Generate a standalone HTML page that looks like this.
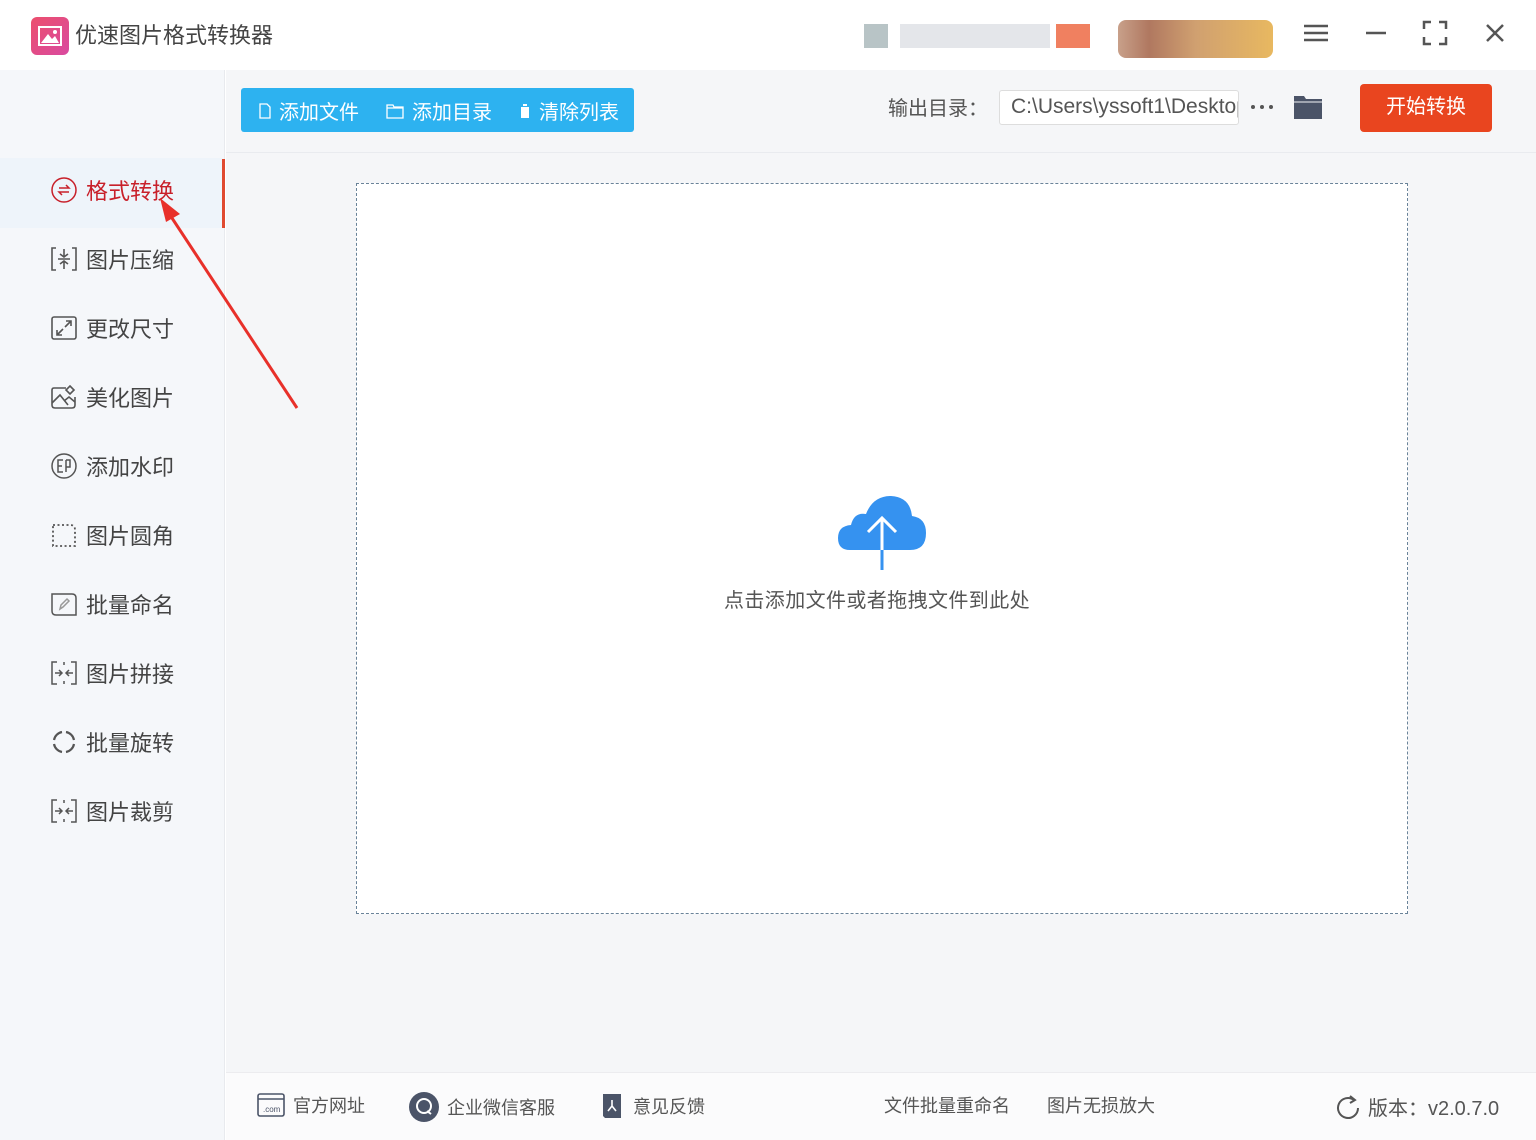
<!DOCTYPE html>
<html><head><meta charset="utf-8"><style>
*{margin:0;padding:0;box-sizing:border-box}
body{width:1536px;height:1140px;overflow:hidden;background:#fff;font-family:"Liberation Sans","Noto Sans CJK SC",sans-serif;color:#444;position:relative}
.abs{position:absolute}
.title{left:0;top:0;width:1536px;height:70px;background:#fff}
.side{left:0;top:70px;width:225px;height:1070px;background:#f5f7fa;border-right:1px solid #e8eaee}
.main{left:226px;top:70px;width:1310px;height:1002px;background:#f5f6f8}
.tb{left:226px;top:70px;width:1310px;height:83px;border-bottom:1px solid #e9ebef;background:#f5f6f8}
.item{position:absolute;left:50px;font-size:22px;color:#444;display:flex;align-items:center;gap:8px;height:30px}
.item svg{width:28px;height:28px}
.foot{left:226px;top:1072px;width:1310px;height:68px;background:#fbfbfc;border-top:1px solid #ececef}
.ft{position:absolute;top:1092px;font-size:18px;color:#555;display:flex;align-items:center;gap:8px}
</style></head><body>
<div class="abs title"></div>
<div class="abs" style="left:31px;top:17px;width:38px;height:38px;border-radius:6px;background:linear-gradient(135deg,#ec4f6d,#d94aa0)">
<svg width="38" height="38" viewBox="0 0 38 38"><rect x="8" y="10" width="22" height="18" fill="none" stroke="#fff" stroke-width="2"/><path d="M10 26 L17 17 L21 22 L24 19 L28 26Z" fill="#fff"/><circle cx="24" cy="15" r="2" fill="#fff"/></svg></div>
<div class="abs" style="left:75px;top:18px;font-size:22px;color:#444">优速图片格式转换器</div>
<div class="abs" style="left:864px;top:24px;width:24px;height:24px;background:#b8c4c6"></div>
<div class="abs" style="left:900px;top:24px;width:150px;height:24px;background:#e4e6ea"></div>
<div class="abs" style="left:1056px;top:24px;width:34px;height:24px;background:#f08060"></div>
<div class="abs" style="left:1118px;top:20px;width:155px;height:38px;border-radius:8px;background:linear-gradient(90deg,#c8a08a,#b07860 20%,#d0a070 50%,#e8b860)"></div>
<svg class="abs" style="left:1302px;top:22px" width="28" height="22"><path d="M2 4H26M2 11H26M2 18H26" stroke="#555" stroke-width="2.5"/></svg>
<svg class="abs" style="left:1364px;top:22px" width="24" height="22"><path d="M2 11H22" stroke="#555" stroke-width="2.5"/></svg>
<svg class="abs" style="left:1422px;top:20px" width="26" height="26"><path d="M2 9V2H9M17 2H24V9M24 17V24H17M9 24H2V17" fill="none" stroke="#555" stroke-width="2.5"/></svg>
<svg class="abs" style="left:1484px;top:22px" width="22" height="22"><path d="M3 3L19 19M19 3L3 19" stroke="#555" stroke-width="2.5"/></svg>

<div class="abs side"></div>
<div class="abs" style="left:0;top:158px;width:222px;height:70px;background:#eef4fa"></div>
<div class="abs" style="left:222px;top:159px;width:3px;height:69px;background:#e04a30"></div>
<div class="abs main"></div>
<div class="abs tb"></div>

<div class="item" style="top:175px;color:#c8202a"><svg viewBox="0 0 28 28"><circle cx="14" cy="14" r="12" fill="none" stroke="#c8202a" stroke-width="1.5"/><path d="M9 12H19L16 9M19 16H9L12 19" fill="none" stroke="#c8202a" stroke-width="1.5"/></svg>格式转换</div>
<div class="item" style="top:244px"><svg viewBox="0 0 28 28" fill="none" stroke="#555" stroke-width="1.6"><path d="M6 3H2V25H6M22 3H26V25H22M14 4V12M10 9L14 12L18 9M8 14H20M14 24V16M10 19L14 16L18 19"/></svg>图片压缩</div>
<div class="item" style="top:313px"><svg viewBox="0 0 28 28" fill="none" stroke="#555" stroke-width="1.6"><rect x="2" y="3" width="24" height="22" rx="2"/><path d="M16 7H21V12M21 7L15 13M12 21H7V16M7 21L13 15"/></svg>更改尺寸</div>
<div class="item" style="top:382px"><svg viewBox="0 0 28 28" fill="none" stroke="#555" stroke-width="1.6"><path d="M16 5H4Q2 5 2 7V22Q2 25 5 25H22Q25 25 25 22V14"/><path d="M2 20L10 12L18 22M14 18L19 14L25 19"/><path d="M20 3L24 7L20 11L16 7Z"/></svg>美化图片</div>
<div class="item" style="top:451px"><svg viewBox="0 0 28 28" fill="none" stroke="#555" stroke-width="1.5"><circle cx="14" cy="14" r="12"/><path d="M13 8H8V20H13M8 14H12M16 8V20M16 8H20V15H16"/></svg>添加水印</div>
<div class="item" style="top:520px"><svg viewBox="0 0 28 28" fill="none" stroke="#555" stroke-width="1.8" stroke-dasharray="2 2.5"><path d="M3 4H20Q25 4 25 9V25H3Z"/></svg>图片圆角</div>
<div class="item" style="top:589px"><svg viewBox="0 0 28 28" fill="none" stroke="#555" stroke-width="1.5"><path d="M2 4H22Q26 4 26 8V25H6Q2 25 2 21Z"/><path d="M10 19L11 15L17 9L19 11L13 17Z" stroke="#999"/></svg>批量命名</div>
<div class="item" style="top:658px"><svg viewBox="0 0 28 28" fill="none" stroke="#555" stroke-width="1.5"><path d="M7 3H2V25H7M21 3H26V25H21M14 3V6M14 22V25M5 14H12M9 11L12 14L9 17M23 14H16M19 11L16 14L19 17"/></svg>图片拼接</div>
<div class="item" style="top:727px"><svg viewBox="0 0 28 28" fill="none" stroke="#555" stroke-width="2.2"><path d="M4 12A10 10 0 0 1 12 4M16 4A10 10 0 0 1 24 12M24 16A10 10 0 0 1 16 24M12 24A10 10 0 0 1 4 16"/></svg>批量旋转</div>
<div class="item" style="top:796px"><svg viewBox="0 0 28 28" fill="none" stroke="#555" stroke-width="1.5"><path d="M7 3H2V25H7M21 3H26V25H21M14 3V6M14 22V25M5 14H12M9 11L12 14L9 17M23 14H16M19 11L16 14L19 17"/></svg>图片裁剪</div>

<svg class="abs" style="left:150px;top:190px" width="160" height="230"><path d="M147 218L18 22" stroke="#e8302a" stroke-width="3"/><path d="M10 8L30 24L16 32Z" fill="#e8302a"/></svg>

<div class="abs" style="left:241px;top:88px;width:393px;height:44px;background:#2db2f0;border-radius:3px;color:#fff;font-size:20px">
<div class="abs" style="left:18px;top:8px;display:flex;align-items:center;gap:8px"><svg width="12" height="16"><path d="M1 1H8L11 4V15H1Z" fill="none" stroke="#fff" stroke-width="1.3"/></svg>添加文件</div>
<div class="abs" style="left:145px;top:8px;display:flex;align-items:center;gap:8px"><svg width="18" height="16"><path d="M1 2H7L8 4H17V15H1Z M1 5H17" fill="none" stroke="#fff" stroke-width="1.3"/></svg>添加目录</div>
<div class="abs" style="left:278px;top:8px;display:flex;align-items:center;gap:8px"><svg width="12" height="16"><path d="M1 3H11M4 3V1H8V3M2 4H10V15H2Z" fill="#fff"/></svg>清除列表</div>
</div>
<div class="abs" style="left:888px;top:92px;font-size:20px;color:#555">输出目录：</div>
<div class="abs" style="left:999px;top:90px;width:240px;height:35px;background:#fff;border:1px solid #ddd;border-radius:3px;font-size:21px;color:#555;padding:4px 11px;overflow:hidden;white-space:nowrap">C:\Users\yssoft1\Desktop</div>
<svg class="abs" style="left:1250px;top:104px" width="24" height="6"><circle cx="3" cy="3" r="2" fill="#555"/><circle cx="12" cy="3" r="2" fill="#555"/><circle cx="21" cy="3" r="2" fill="#555"/></svg>
<svg class="abs" style="left:1293px;top:94px" width="30" height="26"><path d="M1 2H11L13 5H29V25H1Z" fill="#4b5468"/><path d="M1 8H29" stroke="#f5f6f8" stroke-width="1"/></svg>
<div class="abs" style="left:1360px;top:84px;width:132px;height:48px;background:#e9451f;border-radius:4px;color:#fff;font-size:20px;text-align:center;line-height:46px">开始转换</div>

<div class="abs" style="left:356px;top:183px;width:1052px;height:731px;background:#fff;border:1px dashed #6a8399"></div>
<svg class="abs" style="left:836px;top:494px" width="92" height="78" viewBox="0 0 92 78"><path d="M14 56Q2 56 2 44Q2 32 15 31Q18 18 30 20Q37 2 55 2Q74 3 76 22Q90 24 90 39Q90 56 74 56Z" fill="#3592f0"/><path d="M46 76V24M32 38L46 24L60 38" fill="none" stroke="#fff" stroke-width="3"/><path d="M46 56V76" stroke="#3592f0" stroke-width="3"/></svg>
<div class="abs" style="left:724px;top:584px;font-size:20px;color:#555;letter-spacing:0.4px">点击添加文件或者拖拽文件到此处</div>

<div class="abs foot"></div>
<div class="ft" style="left:257px"><svg width="28" height="26"><rect x="1" y="2" width="26" height="22" rx="2" fill="none" stroke="#4b5468" stroke-width="1.6"/><path d="M1 7H27" stroke="#4b5468" stroke-width="1.6"/><text x="6" y="20" font-size="8" fill="#4b5468">.com</text></svg>官方网址</div>
<div class="ft" style="left:409px"><svg width="30" height="30"><circle cx="15" cy="15" r="15" fill="#4b5468"/><circle cx="15" cy="14" r="7" fill="none" stroke="#fff" stroke-width="2"/><path d="M18 19L22 22" stroke="#fff" stroke-width="2"/></svg>企业微信客服</div>
<div class="ft" style="left:601px"><svg width="24" height="28"><path d="M2 2H20V26H4L2 24Z" fill="#4b5468"/><path d="M11 8V14L7 19M11 14L15 19" stroke="#fff" stroke-width="1.6" fill="none"/></svg>意见反馈</div>
<div class="ft" style="left:884px">文件批量重命名</div>
<div class="ft" style="left:1047px">图片无损放大</div>
<div class="ft" style="left:1336px;font-size:20px"><svg width="24" height="26"><path d="M18 6A10 10 0 1 0 22 14" fill="none" stroke="#555" stroke-width="2"/><path d="M14 2L19 6L14 9" fill="none" stroke="#555" stroke-width="2"/></svg>版本：v2.0.7.0</div>
</body></html>
